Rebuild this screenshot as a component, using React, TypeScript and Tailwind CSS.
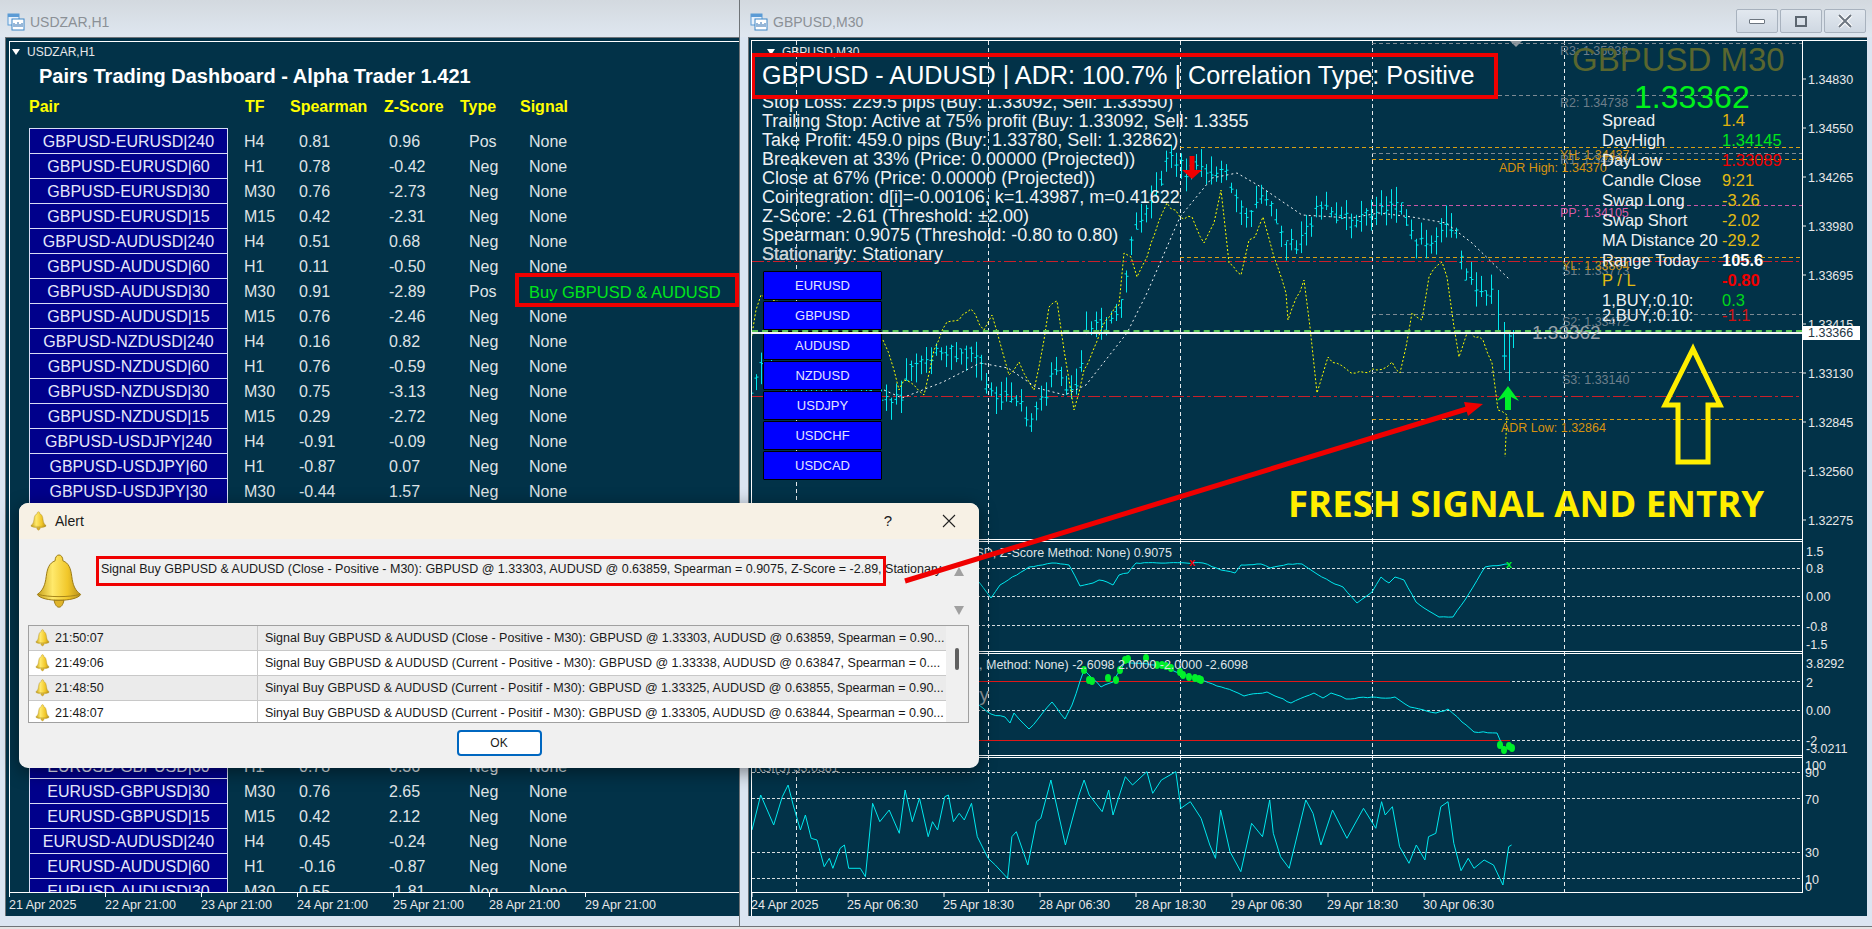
import React from 'react';

type P = [number, number];

const rows1 = [
  ['GBPUSD-EURUSD|240', 'H4', '0.81', '0.96', 'Pos', 'None'],
  ['GBPUSD-EURUSD|60', 'H1', '0.78', '-0.42', 'Neg', 'None'],
  ['GBPUSD-EURUSD|30', 'M30', '0.76', '-2.73', 'Neg', 'None'],
  ['GBPUSD-EURUSD|15', 'M15', '0.42', '-2.31', 'Neg', 'None'],
  ['GBPUSD-AUDUSD|240', 'H4', '0.51', '0.68', 'Neg', 'None'],
  ['GBPUSD-AUDUSD|60', 'H1', '0.11', '-0.50', 'Neg', 'None'],
  ['GBPUSD-AUDUSD|30', 'M30', '0.91', '-2.89', 'Pos', 'Buy GBPUSD & AUDUSD'],
  ['GBPUSD-AUDUSD|15', 'M15', '0.76', '-2.46', 'Neg', 'None'],
  ['GBPUSD-NZDUSD|240', 'H4', '0.16', '0.82', 'Neg', 'None'],
  ['GBPUSD-NZDUSD|60', 'H1', '0.76', '-0.59', 'Neg', 'None'],
  ['GBPUSD-NZDUSD|30', 'M30', '0.75', '-3.13', 'Neg', 'None'],
  ['GBPUSD-NZDUSD|15', 'M15', '0.29', '-2.72', 'Neg', 'None'],
  ['GBPUSD-USDJPY|240', 'H4', '-0.91', '-0.09', 'Neg', 'None'],
  ['GBPUSD-USDJPY|60', 'H1', '-0.87', '0.07', 'Neg', 'None'],
  ['GBPUSD-USDJPY|30', 'M30', '-0.44', '1.57', 'Neg', 'None'],
];

const rows2 = [
  ['EURUSD-GBPUSD|60', 'H1', '0.78', '0.36', 'Neg', 'None'],
  ['EURUSD-GBPUSD|30', 'M30', '0.76', '2.65', 'Neg', 'None'],
  ['EURUSD-GBPUSD|15', 'M15', '0.42', '2.12', 'Neg', 'None'],
  ['EURUSD-AUDUSD|240', 'H4', '0.45', '-0.24', 'Neg', 'None'],
  ['EURUSD-AUDUSD|60', 'H1', '-0.16', '-0.87', 'Neg', 'None'],
  ['EURUSD-AUDUSD|30', 'M30', '0.55', '-1.81', 'Neg', 'None'],
];

const priceTrack: P[] = [
  [752, 393], [760, 370], [800, 385], [840, 395], [885, 400], [900, 400], [910, 373], [925, 363], [945, 353],
  [965, 357], [980, 355], [988, 393], [1005, 397], [1020, 400], [1030, 423], [1045, 400], [1055, 360],
  [1070, 393], [1080, 380], [1088, 327], [1100, 330], [1115, 320], [1125, 293], [1130, 250], [1140, 217],
  [1155, 197], [1170, 153], [1185, 170], [1200, 160], [1215, 177], [1225, 167], [1240, 207], [1250, 213],
  [1270, 197], [1285, 240], [1300, 247], [1318, 207], [1335, 213], [1350, 223], [1375, 213], [1395, 205],
  [1405, 215], [1415, 238], [1430, 240], [1445, 225], [1455, 225], [1465, 270], [1480, 290], [1495, 290],
  [1500, 310], [1505, 340], [1514, 350],
];

const yellowLine: P[] = [
  [752, 340], [757, 310], [762, 295], [884, 340], [895, 370], [900, 390], [905, 380], [915, 385], [925, 395],
  [935, 350], [948, 322], [960, 320], [972, 309], [985, 330], [993, 315], [1003, 350], [1010, 375], [1020, 362],
  [1035, 390], [1045, 340], [1050, 307], [1058, 301], [1065, 350], [1075, 410], [1085, 370], [1107, 320],
  [1120, 305], [1125, 253], [1132, 257], [1138, 277], [1148, 257], [1156, 233], [1168, 203], [1181, 217],
  [1193, 217], [1205, 243], [1215, 223], [1222, 190], [1230, 263], [1242, 275], [1250, 240], [1256, 237],
  [1264, 217], [1275, 257], [1287, 293], [1289, 320], [1305, 280], [1311, 327], [1318, 393], [1329, 357],
  [1352, 373], [1378, 370], [1393, 362], [1401, 373], [1407, 347], [1413, 313], [1423, 320], [1430, 277],
  [1443, 262], [1448, 277], [1455, 327], [1460, 357], [1468, 333], [1484, 340], [1493, 363], [1499, 410],
  [1508, 415], [1506, 457],
];

const maLine: P[] = [
  [885, 390], [903, 398], [944, 382], [981, 363], [1009, 368], [1038, 388], [1066, 395], [1087, 385], [1128, 333],
  [1148, 293], [1181, 217], [1213, 178], [1238, 173], [1262, 187], [1303, 215], [1352, 218], [1380, 213],
  [1413, 217], [1447, 223], [1473, 243], [1510, 279],
];

const spearmanLine: P[] = [
  [980, 582], [992, 598], [1001, 585], [1030, 567], [1053, 563], [1070, 565], [1081, 586], [1094, 583], [1100, 580],
  [1108, 582], [1114, 585], [1120, 575], [1129, 573], [1137, 563], [1187, 563], [1204, 563], [1222, 570], [1236, 573],
  [1242, 565], [1262, 564], [1271, 568], [1289, 564], [1303, 564], [1318, 574], [1332, 582], [1344, 587], [1358, 603],
  [1373, 592], [1382, 577], [1390, 583], [1396, 577], [1405, 580], [1417, 602], [1425, 608], [1440, 617], [1454, 617],
  [1466, 600], [1486, 567], [1510, 564],
];

const zscoreLine: P[] = [
  [980, 705], [992, 714], [1006, 717], [1011, 723], [1015, 713], [1030, 729], [1039, 719], [1053, 702], [1066, 719],
  [1073, 705], [1085, 670], [1102, 687], [1114, 682], [1126, 662], [1161, 665], [1181, 673], [1201, 680], [1239, 693],
  [1245, 696], [1268, 692], [1292, 703], [1315, 693], [1324, 698], [1332, 693], [1347, 699], [1373, 697], [1382, 698],
  [1396, 697], [1411, 707], [1437, 713], [1449, 709], [1463, 722], [1475, 732], [1498, 733], [1504, 747], [1512, 748],
];

const zscoreDots: P[] = [
  [1085, 670], [1090, 680], [1093, 681], [1109, 678], [1117, 680], [1121, 670], [1126, 660], [1129, 659], [1147, 658],
  [1158, 665], [1163, 665], [1167, 666], [1172, 668], [1181, 672], [1184, 675], [1190, 677], [1196, 678], [1200, 679],
  [1202, 680], [1501, 745], [1505, 750], [1510, 746], [1513, 748],
];

// rsi points read off the 1.385x crop, converted below
const rsiRaw: P[] = [
  [18, 240], [30, 135], [48, 225], [60, 140], [68, 105], [75, 165], [85, 240], [92, 195], [100, 265], [108, 270],
  [118, 350], [125, 325], [130, 355], [140, 295], [146, 285], [152, 355], [168, 355], [175, 380], [185, 160], [195, 215],
  [208, 180], [222, 250], [230, 120], [240, 215], [250, 145], [262, 260], [268, 215], [275, 240], [285, 140], [290, 135],
  [297, 215], [305, 190], [312, 210], [322, 160], [330, 260], [345, 325], [355, 345], [372, 385], [378, 260], [384, 245],
  [400, 345], [412, 215], [418, 205], [432, 90], [452, 285], [470, 140], [478, 90], [485, 135], [503, 185], [512, 120],
  [518, 195], [535, 80], [545, 105], [565, 65], [573, 130], [585, 90], [605, 65], [612, 175], [625, 155], [640, 205],
  [652, 285], [660, 325], [667, 180], [680, 305], [695, 365], [710, 220], [725, 260], [735, 150], [740, 250], [750, 320],
  [762, 355], [785, 150], [795, 190], [806, 285], [822, 180], [842, 265], [865, 175], [882, 235], [890, 155], [895, 195],
  [905, 170], [915, 290], [928, 340], [938, 285], [950, 330], [955, 260], [965, 250], [972, 170], [982, 155], [990, 280],
  [1000, 362], [1010, 325], [1018, 355], [1032, 330], [1045, 345], [1058, 405], [1066, 290], [1070, 285],
];
const rsiLine: P[] = rsiRaw.map(([x, y]) => [740 + x / 1.385, 750 + y / 3]);

const toPoints = (pts: P[]) => pts.map(([x, y]) => `${x.toFixed(1)},${y.toFixed(1)}`).join(' ');

function makeRnd(start: number) {
  let seed = start;
  return () => {
    seed = (seed * 1103 + 12345) % 65536;
    return seed / 65536;
  };
}

// adds small wiggles between the read-off points
function wiggle(pts: P[], amount: number, start: number): P[] {
  const rnd = makeRnd(start);
  const out: P[] = [];
  pts.forEach((p, i) => {
    out.push(p);
    const next = pts[i + 1];
    if (!next) return;
    const n = Math.floor(Math.abs(next[0] - p[0]) / 4);
    for (let k = 1; k < n; k++) {
      const t = k / n;
      out.push([p[0] + (next[0] - p[0]) * t, p[1] + (next[1] - p[1]) * t + (rnd() - 0.5) * amount]);
    }
  });
  return out;
}

function trackAt(x: number) {
  for (let i = 1; i < priceTrack.length; i++) {
    const [x0, y0] = priceTrack[i - 1];
    const [x1, y1] = priceTrack[i];
    if (x <= x1) return y0 + ((y1 - y0) * (x - x0)) / (x1 - x0);
  }
  return priceTrack[priceTrack.length - 1][1];
}

function buildBars() {
  const rnd = makeRnd(37);
  let d = '';
  for (let x = 752; x <= 1495; x += 5) {
    const mid = trackAt(x) + (rnd() - 0.5) * 10;
    const hi = mid - 3 - rnd() * 16;
    const lo = mid + 3 + rnd() * 16;
    const open = mid - 5 + rnd() * 10;
    const close = mid - 5 + rnd() * 10;
    d += `M${x + 0.5} ${hi.toFixed(1)}V${lo.toFixed(1)}M${x - 1.5} ${open.toFixed(1)}H${x + 0.5}M${x + 0.5} ${close.toFixed(1)}H${x + 2.5}`;
  }
  // last bars drop down toward the entry arrow
  d += 'M1499.5 290V332M1505.5 322V370M1510.5 330V381M1514.5 330V348M1503 356H1508M1510 336H1513';
  return d;
}

const grid = [797.5, 989.5, 1181.5, 1373.5, 1565.5];

const mainLabels: [number, number, string, string][] = [
  [1561, 50, '#6d7f8b', 'R3: 1.35039'],
  [1561, 102, '#6d7f8b', 'R2: 1.34738'],
  [1561, 159, '#6d7f8b', 'R1: 1.34404'],
  [1561, 154, '#c98f14', 'YH: 1.34437'],
  [1500, 167, '#d8920f', 'ADR High: 1.34370'],
  [1561, 212, '#d75aa6', 'PP: 1.34105'],
  [1563, 270, '#6d7f8b', 'S1: 1.33773'],
  [1563, 265, '#c98f14', 'YL: 1.33804'],
  [1563, 321, '#6d7f8b', 'S2: 1.33472'],
  [1563, 379, '#6d7f8b', 'S3: 1.33140'],
  [1502, 427, '#d8920f', 'ADR Low: 1.32864'],
];

const mainAxis: [number, string][] = [
  [79, '1.34830'], [128, '1.34550'], [177, '1.34265'], [226, '1.33980'], [275, '1.33695'],
  [324, '1.33415'], [373, '1.33130'], [422, '1.32845'], [471, '1.32560'], [520, '1.32275'],
];

const infoRows: [string, string, string][] = [
  ['Spread', '1.4', 'text-[#e0b30c]'],
  ['DayHigh', '1.34145', 'text-[#00e61a]'],
  ['DayLow', '1.33089', 'text-[#f00000]'],
  ['Candle Close', '9:21', 'text-[#e3bb12]'],
  ['Swap Long', '-3.26', 'text-[#e3bb12]'],
  ['Swap Short', '-2.02', 'text-[#e3bb12]'],
  ['MA Distance 20', '-29.2', 'text-[#e3bb12]'],
  ['Range Today', '105.6', 'text-white font-bold'],
];

const symbols = ['EURUSD', 'GBPUSD', 'AUDUSD', 'NZDUSD', 'USDJPY', 'USDCHF', 'USDCAD'];

const alertRows = [
  ['21:50:07', 'Signal Buy GBPUSD & AUDUSD (Close - Positive - M30): GBPUSD @ 1.33303, AUDUSD @ 0.63859, Spearman = 0.90...'],
  ['21:49:06', 'Signal Buy GBPUSD & AUDUSD (Current - Positive - M30): GBPUSD @ 1.33338, AUDUSD @ 0.63847, Spearman = 0....'],
  ['21:48:50', 'Sinyal Buy GBPUSD & AUDUSD (Current - Positif - M30): GBPUSD @ 1.33325, AUDUSD @ 0.63855, Spearman = 0.90...'],
  ['21:48:07', 'Sinyal Buy GBPUSD & AUDUSD (Current - Positif - M30): GBPUSD @ 1.33305, AUDUSD @ 0.63844, Spearman = 0.90...'],
];

function WindowIcon() {
  return (
    <svg width="18" height="18" viewBox="0 0 18 18" className="shrink-0">
      <rect x="1" y="1" width="11" height="11" fill="#e8f1fb" stroke="#5b9bd5" />
      <rect x="1" y="1" width="11" height="3" fill="#5b9bd5" />
      <rect x="5" y="6" width="12" height="11" fill="#fff" stroke="#3d85c6" />
      <path d="M7 14V10M9 14V11M11 14V9M13 14V11M15 14V10" stroke="#2f6fb0" fill="none" />
    </svg>
  );
}

function Bell({ size }: { size: number }) {
  return (
    <svg width={size} height={size * 1.15} viewBox="0 0 48 56" className="shrink-0">
      <defs>
        <linearGradient id="bellFill" x1="0" x2="1" y1="0" y2="0">
          <stop offset="0" stopColor="#c9a21a" />
          <stop offset="0.35" stopColor="#ffe96b" />
          <stop offset="0.7" stopColor="#f1c72a" />
          <stop offset="1" stopColor="#b8901a" />
        </linearGradient>
      </defs>
      <path d="M20 8C20 4 22 2 24 2C26 2 28 4 28 8C34 10 36 16 37 24C38 32 40 38 46 42C44 46 34 48 24 48C14 48 4 46 2 42C8 38 10 32 11 24C12 16 14 10 20 8Z" fill="url(#bellFill)" stroke="#9a7a14" strokeWidth="1" />
      <path d="M3 42C12 45 36 45 45 42" fill="none" stroke="#a5841a" strokeWidth="1" />
      <path d="M19 48C20 53 22 55 24 55C26 55 28 53 29 48Z" fill="#e0b42a" stroke="#9a7a14" strokeWidth="1" />
    </svg>
  );
}

function PairRow({ row }: { row: string[] }) {
  const isSignal = row[5] !== 'None';
  return (
    <div className="grid grid-cols-[215px_55px_90px_80px_60px_1fr] items-center h-[25px] text-[16px] text-[#dfe3e6]">
      <button className="w-[199px] h-[26px] -mb-px bg-[#00008b] border border-[#d8dcf5] text-[#e6e8fa] leading-[26px] text-center">{row[0]}</button>
      <span className="pt-[3px]">{row[1]}</span>
      <span className="pt-[3px]">{row[2]}</span>
      <span className="pt-[3px]">{row[3]}</span>
      <span className="pt-[3px]">{row[4]}</span>
      <span className={isSignal ? 'pt-[3px] text-[#00e61a] text-[16.5px] whitespace-nowrap' : 'pt-[3px]'}>{row[5]}</span>
    </div>
  );
}

function LeftWindow() {
  return (
    <div className="w-[740px] h-full flex flex-col border-r border-[#6f7478]">
      <div className="h-[37px] shrink-0 flex items-center gap-[5px] pl-[7px] pt-[7px] bg-gradient-to-b from-[#d3d9df] to-[#dfe7f0] text-[14px] text-[#8b9096]">
        <WindowIcon />
        <span>USDZAR,H1</span>
      </div>
      <div className="ml-[5px] h-[879px] shrink-0 bg-[#023248] border-t border-l border-[#6f7478] pt-[3px] pl-[3px] flex flex-col">
        <div className="h-[851px] shrink-0 border-t border-l border-white overflow-hidden pl-[19px] relative">
          <div className="h-[20px] flex items-center gap-[7px] -ml-[17px] text-[12px] text-[#e8e8e8]">
            <span className="w-0 h-0 border-x-[4px] border-x-transparent border-t-[6px] border-t-white" />
            <span>USDZAR,H1</span>
          </div>
          <div className="h-[24px] mt-[2px] ml-[10px] flex items-center font-bold text-[20px] text-white whitespace-nowrap">Pairs Trading Dashboard - Alpha Trader 1.421</div>
          <div className="mt-[7px] h-[24px] grid grid-cols-[216px_45px_94px_76px_60px_auto] items-center font-bold text-[16px] text-[#ffff00]">
            <span>Pair</span>
            <span>TF</span>
            <span>Spearman</span>
            <span>Z-Score</span>
            <span>Type</span>
            <span>Signal</span>
          </div>
          <div className="mt-[8px]">
            {rows1.map((r) => <PairRow key={r[0]} row={r} />)}
            <div className="h-[250px]" />
            {rows2.map((r) => <PairRow key={r[0]} row={r} />)}
          </div>
          <div className="absolute left-[505px] top-[231px] w-[224px] h-[34px] border-[4px] border-[#f00000]" />
        </div>
        <svg className="block w-[730px] h-[24px] shrink-0" viewBox="9 892 730 24">
          <line x1="9" x2="739" y1="892.5" y2="892.5" stroke="#fff" />
          {[9, 105, 201, 297, 393, 489, 585].map((x, i) => (
            <g key={x}>
              <line x1={x + 0.5} x2={x + 0.5} y1="892" y2="897" stroke="#fff" />
              <text x={x} y="908.5" fontSize="12.5" fill="#e8e8e8">
                {['21 Apr 2025', '22 Apr 21:00', '23 Apr 21:00', '24 Apr 21:00', '25 Apr 21:00', '28 Apr 21:00', '29 Apr 21:00'][i]}
              </text>
            </g>
          ))}
        </svg>
      </div>
    </div>
  );
}

function Grid({ y1, y2 }: { y1: number; y2: number }) {
  return (
    <>
      {grid.map((x) => (
        <line key={x} x1={x} x2={x} y1={y1} y2={y2} stroke="#fff" strokeDasharray="4 3" opacity="0.9" />
      ))}
    </>
  );
}

function AxisLabel({ y, text }: { y: number; text: string }) {
  return (
    <g>
      <line x1="1803" x2="1807" y1={y} y2={y} stroke="#e8e8e8" />
      <text x="1809" y={y + 4.5} fontSize="12.5" fill="#e8e8e8">{text}</text>
    </g>
  );
}

function MainPanel() {
  return (
    <div className="relative h-[499px] w-[1114px] shrink-0">
      <svg className="block w-[1114px] h-[499px]" viewBox="753 41 1114 499">
        <Grid y1={41} y2={539} />
        <path d="M1511 41H1523L1517 47Z" fill="#8d979e" />
        {/* pivot levels */}
        {[43, 95, 153, 314, 372].map((y) => (
          <line key={y} x1="1373" x2="1803" y1={y + 0.5} y2={y + 0.5} stroke="#7d8a93" strokeDasharray="4 3" />
        ))}
        <line x1="1373" x2="1803" y1="205.5" y2="205.5" stroke="#c957a5" strokeDasharray="4 3" />
        <line x1="1181" x2="1803" y1="147.5" y2="147.5" stroke="#d9a015" strokeDasharray="4 3" />
        <line x1="1181" x2="1803" y1="257.5" y2="257.5" stroke="#d9a015" strokeDasharray="4 3" />
        <line x1="1373" x2="1803" y1="159.5" y2="159.5" stroke="#d9a015" strokeDasharray="4 3" />
        <line x1="1373" x2="1803" y1="419.5" y2="419.5" stroke="#d9a015" strokeDasharray="4 3" />
        <line x1="753" x2="1803" y1="261.5" y2="261.5" stroke="#c9202a" strokeDasharray="12 3 3 3" />
        <line x1="753" x2="1803" y1="396.5" y2="396.5" stroke="#c9202a" strokeDasharray="12 3 3 3" />
        {/* candles and overlays */}
        <path d={buildBars()} stroke="#00e8ee" strokeWidth="1" fill="none" />
        <polyline points={toPoints(wiggle(yellowLine, 5, 91))} stroke="#ffff00" strokeWidth="1" strokeDasharray="2 2" fill="none" />
        <polyline points={toPoints(maLine)} stroke="#eef2f4" strokeWidth="1" strokeDasharray="2 3" fill="none" />
        {mainLabels.map(([x, y, c, t]) => (
          <text key={t} x={x} y={y + 4.5} fontSize="12.5" fill={c}>{t}</text>
        ))}
        {/* arrows from the signal */}
        <path d="M1190.5 156H1195.5V170H1203L1193 179L1183 170H1190.5Z" fill="#f00000" />
        <path d="M1509 386L1520 401L1512 397V410H1506V397L1498 401Z" fill="#00f02a" />
        <line x1="1803.5" x2="1803.5" y1="41" y2="540" stroke="#fff" />
        {mainAxis.map(([y, t]) => <AxisLabel key={t} y={y} text={t} />)}
        <line x1="753" x2="1803" y1="539.5" y2="539.5" stroke="#fff" />
      </svg>

      <div className="absolute left-[18px] top-[2px] flex items-center gap-[7px] text-[12px] text-[#e8e8e8]">
        <span className="-ml-[3px] w-0 h-0 border-x-[4px] border-x-transparent border-t-[6px] border-t-white" />
        <span>GBPUSD,M30</span>
      </div>

      <div className="absolute left-[10px] top-[52px] text-[18px] leading-[19px] text-[#eef1f3] whitespace-nowrap">
        <div>Stop Loss: 229.5 pips (Buy: 1.33092, Sell: 1.33550)</div>
        <div>Trailing Stop: Active at 75% profit (Buy: 1.33092, Sell: 1.3355</div>
        <div>Take Profit: 459.0 pips (Buy: 1.33780, Sell: 1.32862)</div>
        <div>Breakeven at 33% (Price: 0.00000 (Projected))</div>
        <div>Close at 67% (Price: 0.00000 (Projected))</div>
        <div>Cointegration: d[i]=-0.00106, k=1.43987, m=0.41622</div>
        <div>Z-Score: -2.61 (Threshold: ±2.00)</div>
        <div>Spearman: 0.9075 (Threshold: -0.80 to 0.80)</div>
        <div className="relative">
          Stationarity: Stationary
          <span className="absolute left-0 top-0 text-[#c9ced2]">Stationary</span>
        </div>
      </div>

      <div className="absolute -left-px top-[12px] w-[747px] h-[46px] border-[4px] border-[#f00000] flex items-center pl-[7px] text-[25.2px] text-white whitespace-nowrap">
        GBPUSD - AUDUSD | ADR: 100.7% | Correlation Type: Positive
      </div>

      <div className="absolute left-[11px] top-[230px] flex flex-col gap-px">
        {symbols.map((s) => (
          <button key={s} className="w-[119px] h-[29px] bg-[#0000ff] border border-black rounded-[1px] text-[13px] text-[#e4e4ff]">{s}</button>
        ))}
      </div>

      <div className="absolute left-0 top-[289px] w-[1050px] border-t-2 border-dashed border-[#58c455]" />
      <div className="absolute left-0 top-[291px] w-[1050px] h-[2px] bg-[#f2f2f2]" />

      <span className="absolute left-[780px] top-[280px] text-[19px] text-[#98a2a8] leading-[24px]">1.33362</span>

      <div className="absolute left-[820px] top-0 w-[210px] text-center text-[33px] leading-[38px] text-[#59662f] whitespace-nowrap">GBPUSD M30</div>
      <div className="absolute left-[882px] top-[37px] text-[32px] leading-[38px] text-[#00f21a]">1.33362</div>

      <div className="absolute left-[850px] top-[69px] w-[210px] text-[16.5px] leading-[20px] text-[#eef1f3] whitespace-nowrap">
        {infoRows.map(([l, v, c]) => (
          <div key={l} className="grid grid-cols-[120px_1fr]">
            <span>{l}</span>
            <span className={c}>{v}</span>
          </div>
        ))}
        <div className="grid grid-cols-[120px_1fr] font-bold">
          <span className="font-normal text-[#e3bb12]">P / L</span>
          <span className="text-[#f00000]">-0.80</span>
        </div>
        <div className="grid grid-cols-[120px_1fr]">
          <span>1,BUY,:0.10:</span>
          <span className="text-[#00d61a]">0.3</span>
        </div>
        <div className="grid grid-cols-[120px_1fr] -mt-[5px]">
          <span>2,BUY,:0.10:</span>
          <span className="text-[#d01010]">-1.1</span>
        </div>
      </div>

      <div className="absolute left-[1051px] top-[285px] w-[57px] h-[14px] bg-white text-[#23343f] text-[12.5px] leading-[14px] pl-[5px]">1.33366</div>
    </div>
  );
}

function SubPanel({ y, h, children }: { y: number; h: number; children: React.ReactNode }) {
  return (
    <svg className={h === 112 ? 'block w-[1114px] h-[112px] shrink-0' : h === 104 ? 'block w-[1114px] h-[104px] shrink-0' : 'block w-[1114px] h-[137px] shrink-0'} viewBox={`753 ${y} 1114 ${h}`}>
      {children}
      <line x1="1803.5" x2="1803.5" y1={y} y2={y + h} stroke="#fff" />
      <line x1="753" x2="1803" y1={y + 1.5} y2={y + 1.5} stroke="#fff" />
      <line x1="753" x2="1803" y1={y + h - 0.5} y2={y + h - 0.5} stroke="#fff" />
    </svg>
  );
}

function Level({ y, x1 = 753 }: { y: number; x1?: number }) {
  return <line x1={x1} x2="1803" y1={y + 0.5} y2={y + 0.5} stroke="#d8dde0" strokeDasharray="3 2" />;
}

function RightWindow() {
  return (
    <div className="flex-1 h-full flex flex-col">
      <div className="h-[37px] shrink-0 flex items-center gap-[5px] pl-[10px] pt-[7px] bg-gradient-to-b from-[#d3d9df] to-[#dfe7f0] text-[14px] text-[#8b9096]">
        <WindowIcon />
        <span>GBPUSD,M30</span>
        <div className="ml-auto mr-[6px] flex gap-[2px] -mt-[2px]">
          <div className="w-[42px] h-[24px] rounded-[2px] border border-[#a8b2be] bg-gradient-to-b from-[#e2e8ef] to-[#cfd8e2] flex items-center justify-center">
            <span className="w-[16px] h-[5px] bg-white border border-[#6d7680] rounded-[1px]" />
          </div>
          <div className="w-[42px] h-[24px] rounded-[2px] border border-[#a8b2be] bg-gradient-to-b from-[#e2e8ef] to-[#cfd8e2] flex items-center justify-center">
            <span className="w-[12px] h-[11px] border-[2px] border-[#5c6670]" />
          </div>
          <div className="w-[42px] h-[24px] rounded-[2px] border border-[#a8b2be] bg-gradient-to-b from-[#e2e8ef] to-[#cfd8e2] flex items-center justify-center">
            <svg width="16" height="14" viewBox="0 0 16 14"><path d="M2 1L14 13M14 1L2 13" stroke="#fff" strokeWidth="4" /><path d="M2 1L14 13M14 1L2 13" stroke="#6d7680" strokeWidth="2" /></svg>
          </div>
        </div>
      </div>
      <div className="ml-[8px] mr-[5px] h-[879px] shrink-0 bg-[#023248] border-t border-l border-[#6f7478] pt-[2px] pl-[2px] flex flex-col">
        <div className="border-t border-l border-white flex flex-col overflow-hidden h-[876px]">
          <MainPanel />
          <SubPanel y={540} h={112}>
            <Grid y1={540} y2={652} />
            <Level y={568} />
            <Level y={596} />
            <Level y={625} />
            <polyline points={toPoints(wiggle(spearmanLine, 1, 17))} stroke="#00e8ee" fill="none" />
            <text x="1173" y="557" textAnchor="end" fontSize="12.5" fill="#dfe3e6">Spearman(GBPUSD/AUDUSD, Z-Score Method: None) 0.9075</text>
            <text x="1193" y="566" textAnchor="middle" fontSize="11" fontWeight="bold" fill="#f00000">x</text>
            <text x="1510" y="568" textAnchor="middle" fontSize="11" fontWeight="bold" fill="#00f02a">x</text>
            {[[551, '1.5'], [568, '0.8'], [596, '0.00'], [626, '-0.8'], [644, '-1.5']].map(([y, t]) => (
              <text key={t as string} x="1807" y={(y as number) + 4.5} fontSize="12.5" fill="#e8e8e8">{t}</text>
            ))}
          </SubPanel>
          <SubPanel y={652} h={104}>
            <Grid y1={652} y2={756} />
            <Level y={681} />
            <Level y={710} />
            <Level y={740} />
            <line x1="753" x2="1511" y1="681.5" y2="681.5" stroke="#e01818" />
            <line x1="753" x2="1511" y1="740.5" y2="740.5" stroke="#e01818" />
            <polyline points={toPoints(wiggle(zscoreLine, 1.5, 23))} stroke="#00e8ee" fill="none" />
            {zscoreDots.map(([x, y]) => <ellipse key={`${x}-${y}`} cx={x} cy={y} rx="3" ry="4" fill="#00f02a" />)}
            <text x="1249" y="669" textAnchor="end" fontSize="12.5" fill="#dfe3e6">Z-Score (GBPUSD/AUDUSD, Method: None) -2.6098 2.0000 -2.0000 -2.6098</text>
            <text x="990" y="701" textAnchor="end" fontSize="19" fill="#98a2a8">ry</text>
            {[[663, '3.8292'], [682, '2'], [710, '0.00'], [740, '-2'], [748, '-3.0211']].map(([y, t]) => (
              <text key={t as string} x="1807" y={(y as number) + 4.5} fontSize="12.5" fill="#e8e8e8">{t}</text>
            ))}
          </SubPanel>
          <SubPanel y={756} h={137}>
            <Grid y1={756} y2={892} />
            <Level y={772} />
            <Level y={798} />
            <Level y={852} />
            <Level y={878} />
            <polyline points={toPoints(rsiLine)} stroke="#00e8ee" fill="none" />
            <text x="755" y="772" fontSize="12.5" fill="#b9c2c8">RSI(5) 33.0381</text>
            {[[765, '100'], [772, '90'], [799, '70'], [852, '30'], [879, '10'], [886, '0']].map(([y, t]) => (
              <text key={t as string} x="1806" y={(y as number) + 4.5} fontSize="12.5" fill="#e8e8e8">{t}</text>
            ))}
          </SubPanel>
          <svg className="block w-[1114px] h-[23px] shrink-0" viewBox="753 893 1114 23">
            {['24 Apr 2025', '25 Apr 06:30', '25 Apr 18:30', '28 Apr 06:30', '28 Apr 18:30', '29 Apr 06:30', '29 Apr 18:30', '30 Apr 06:30'].map((t, i) => (
              <g key={t}>
                <line x1={753 + i * 96} x2={753 + i * 96} y1="893" y2="897" stroke="#fff" />
                <text x={752 + i * 96} y="908.5" fontSize="12.5" fill="#e8e8e8">{t}</text>
              </g>
            ))}
          </svg>
        </div>
      </div>
    </div>
  );
}

function AlertDialog() {
  return (
    <div className="absolute left-[19px] top-[503px] w-[960px] h-[265px] rounded-[9px] overflow-hidden bg-[#f0f0f0] shadow-[0_4px_18px_rgba(0,0,0,0.45)] flex flex-col text-[#1a1a1a]">
      <div className="h-[36px] shrink-0 bg-[#f7f1e5] flex items-center pl-[11px] text-[14px]">
        <Bell size={17} />
        <span className="ml-[8px]">Alert</span>
        <span className="ml-auto text-[15px]">?</span>
        <svg width="14" height="14" viewBox="0 0 14 14" className="ml-[50px] mr-[23px]"><path d="M1 1L13 13M13 1L1 13" stroke="#222" strokeWidth="1.1" /></svg>
      </div>
      <div className="h-[86px] shrink-0 flex pl-[16px] pt-[14px] relative">
        <Bell size={48} />
        <div className="ml-[18px] w-[843px] h-[32px] overflow-hidden whitespace-nowrap text-[12.5px] leading-[32px]">
          Signal Buy GBPUSD &amp; AUDUSD (Close - Positive - M30): GBPUSD @ 1.33303, AUDUSD @ 0.63859, Spearman = 0.9075, Z-Score = -2.89, Stationary
        </div>
        <div className="absolute left-[77px] top-[17px] w-[790px] h-[30px] border-[3px] border-[#f00000]" />
        <div className="absolute right-[11px] top-[28px] w-[18px] h-[48px] flex flex-col items-center justify-between">
          <span className="w-0 h-0 border-x-[5px] border-x-transparent border-b-[9px] border-b-[#a0a0a0]" />
          <span className="w-0 h-0 border-x-[5px] border-x-transparent border-t-[9px] border-t-[#a0a0a0]" />
        </div>
      </div>
      <div className="ml-[9px] w-[941px] h-[98px] shrink-0 border border-[#a0a0a0] flex overflow-hidden bg-white">
        <div className="flex-1 min-w-0">
          {alertRows.map(([t, m], i) => (
            <div key={t} className={i % 2 === 0 ? 'h-[25px] bg-[#ebebeb] border-b border-[#c8c8c8] flex items-center text-[12.5px]' : 'h-[25px] bg-white border-b border-[#c8c8c8] flex items-center text-[12.5px]'}>
              <div className="w-[229px] h-full shrink-0 flex items-center gap-[5px] pl-[6px] border-r border-[#c8c8c8]">
                <Bell size={15} />
                <span>{t}</span>
              </div>
              <span className="pl-[7px] whitespace-nowrap">{m}</span>
            </div>
          ))}
        </div>
        <div className="w-[22px] shrink-0 bg-[#f0f0f0] relative">
          <span className="absolute left-[9px] top-[22px] w-[4px] h-[22px] bg-[#606060] rounded-[2px]" />
        </div>
      </div>
      <div className="flex-1 flex items-center justify-center">
        <button className="w-[85px] h-[26px] bg-white border-[2px] border-[#0067c0] rounded-[4px] text-[12px] mb-[6px]">OK</button>
      </div>
    </div>
  );
}

export default function App() {
  return (
    <div className="relative w-[1872px] h-[929px] overflow-hidden bg-[#dbe5f1] font-['Liberation_Sans',Arial,sans-serif]">
      <div className="flex h-[926px]">
        <LeftWindow />
        <RightWindow />
      </div>
      <div className="h-[3px] border-t border-[#6f7478] bg-[#e3e3e3]" />
      <AlertDialog />
      {/* annotations drawn on top of the screenshot */}
      <svg className="absolute inset-0 w-[1872px] h-[929px] pointer-events-none" viewBox="0 0 1872 929">
        <line x1="905" y1="581" x2="1470" y2="408" stroke="#f00000" strokeWidth="5" />
        <path d="M1483 404L1464 402L1468 416Z" fill="#f00000" />
        <path d="M1693 349L1720 405H1708V462H1678V405H1665Z" fill="none" stroke="#ffee00" strokeWidth="5" />
      </svg>
      <span className="absolute left-[1288px] top-[477px] font-['Open_Sans',sans-serif] font-bold text-[36.6px] leading-[52px] text-[#ffee00] whitespace-nowrap">FRESH SIGNAL AND ENTRY</span>
    </div>
  );
}
